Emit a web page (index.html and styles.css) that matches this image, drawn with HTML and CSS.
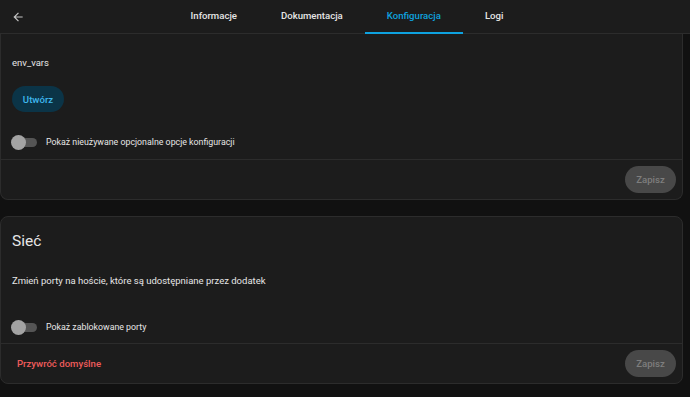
FILE: index.html
```html
<!DOCTYPE html>
<html lang="pl">
<head>
  <meta charset="UTF-8" />
  <title>Konfiguracja dodatku</title>
  <link rel="stylesheet" href="styles.css">
</head>
<body>

  <header class="toolbar">
    <button class="back-btn" aria-label="Wstecz">
      <svg width="14" height="14" viewBox="0 0 24 24"><path d="M20 11v2H8l5.5 5.5-1.42 1.42L4.16 12l7.92-7.92L13.5 5.5 8 11h12z" fill="currentColor"/></svg>
    </button>
    <nav class="tabs">
      <a class="tab">Informacje</a>
      <a class="tab">Dokumentacja</a>
      <a class="tab active">Konfiguracja</a>
      <a class="tab">Logi</a>
    </nav>
    <div></div>
  </header>

  <main class="content">
    <section class="card card-cut">
      <div class="card-body">
        <div class="field-name">env_vars</div>
        <button class="btn-tonal">Utwórz</button>
        <label class="switch-row first-switch">
          <span class="switch"><span class="thumb"></span></span>
          Pokaż nieużywane opcjonalne opcje konfiguracji
        </label>
      </div>
      <div class="card-actions">
        <span></span>
        <button class="btn-save" disabled>Zapisz</button>
      </div>
    </section>

    <section class="card">
      <div class="card-body">
        <h2 class="card-title">Sieć</h2>
        <p class="card-desc">Zmień porty na hoście, które są udostępniane przez dodatek</p>
        <label class="switch-row">
          <span class="switch"><span class="thumb"></span></span>
          Pokaż zablokowane porty
        </label>
      </div>
      <div class="card-actions">
        <button class="btn-text-danger">Przywróć domyślne</button>
        <button class="btn-save" disabled>Zapisz</button>
      </div>
    </section>
  </main>

</body>
</html>
```

FILE: styles.css
```css
:root {
  --page-bg: #111111;
  --card-bg: #1c1c1c;
  --divider: #2c2c2c;
  --text: #e6e6e6;
  --accent: #0ea2df;
  --danger: #ee5b5b;
}

body {
  margin: 0;
  background: var(--page-bg);
  color: var(--text);
  font-family: Roboto, "Noto Sans", sans-serif;
  font-size: 9.5px;
  overflow: hidden;
}

button {
  font-family: inherit;
  border: none;
  cursor: pointer;
}

/* Top bar */
.toolbar {
  height: 33px;
  background: var(--card-bg);
  border-bottom: 1px solid var(--divider);
  display: grid;
  grid-template-columns: 1fr auto 1fr;
  align-items: stretch;
}

.back-btn {
  background: none;
  color: #c4c4c4;
  width: 36px;
  padding: 0 0 0 11px;
  display: flex;
  align-items: center;
  justify-self: start;
}

.tabs {
  display: flex;
  margin-left: 4px;
}

.tab {
  padding: 0 22px 2px;
  display: flex;
  align-items: center;
  font-size: 9.6px;
  font-weight: 500;
  color: var(--text);
  border-bottom: 2px solid transparent;
  margin-bottom: -1px;
}
.tab.active {
  color: var(--accent);
  border-bottom-color: var(--accent);
}

/* Cards */
.content {
  margin-right: 7px;
}

.card {
  background: var(--card-bg);
  border: 1px solid var(--divider);
  border-radius: 8px;
  margin-bottom: 16px;
}
.card-cut {
  border-top: none;
  border-radius: 0 0 8px 8px;
}

.card-body {
  padding: 0 11px;
}
.card-cut .card-body {
  padding-top: 22px;
}

.field-name {
  line-height: 14px;
}

.btn-tonal {
  margin-top: 16px;
  height: 26px;
  width: 52px;
  border-radius: 13px;
  background: #0b3447;
  color: #3fb8ef;
  font-size: 9.6px;
  font-weight: 500;
}

.switch-row {
  display: flex;
  align-items: center;
  gap: 9px;
  height: 16px;
  padding-bottom: 8px;
  font-size: 8.8px;
}
.first-switch {
  margin-top: 22px;
  padding-bottom: 9px;
}

.switch {
  position: relative;
  width: 25px;
  height: 9px;
  border-radius: 5px;
  background: #555555;
}
.thumb {
  position: absolute;
  left: -1px;
  top: -3px;
  width: 15px;
  height: 15px;
  border-radius: 50%;
  background: #a3a3a3;
}

.card-title {
  margin: 0;
  padding-top: 14px;
  font-size: 15.5px;
  font-weight: 400;
  line-height: 20px;
}

.card-desc {
  margin: 23px 0 0;
  line-height: 14px;
}
.card-desc + .switch-row {
  margin-top: 31px;
}

.card-actions {
  border-top: 1px solid var(--divider);
  display: flex;
  justify-content: space-between;
  align-items: center;
  padding: 6px 6px;
}

.btn-save {
  height: 27px;
  width: 51px;
  border-radius: 14px;
  background: #484848;
  color: #7e7e7e;
  font-size: 9.6px;
  font-weight: 500;
  cursor: default;
}

.btn-text-danger {
  background: none;
  color: var(--danger);
  font-size: 9.6px;
  font-weight: 500;
  padding: 0 10px;
  height: 27px;
}
```
